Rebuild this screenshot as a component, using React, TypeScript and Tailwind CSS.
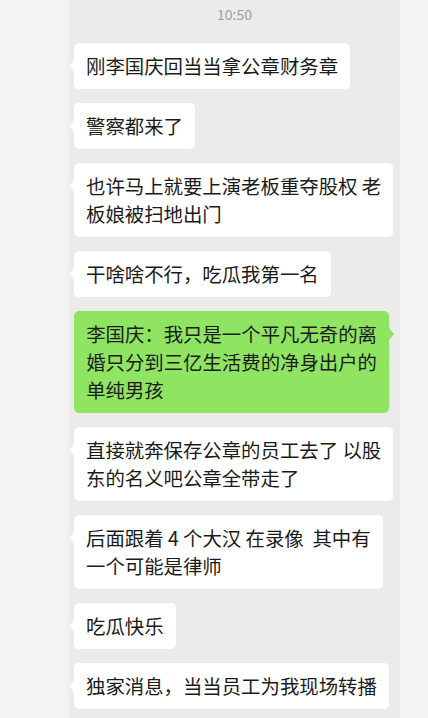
type Message = {
  id: number;
  text: string;
  mine?: boolean;
};

const messages: Message[] = [
  { id: 1, text: "刚李国庆回当当拿公章财务章" },
  { id: 2, text: "警察都来了" },
  { id: 3, text: "也许马上就要上演老板重夺股权 老\n板娘被扫地出门" },
  { id: 4, text: "干啥啥不行，吃瓜我第一名" },
  {
    id: 5,
    text: "李国庆：我只是一个平凡无奇的离\n婚只分到三亿生活费的净身出户的\n单纯男孩",
    mine: true,
  },
  { id: 6, text: "直接就奔保存公章的员工去了 以股\n东的名义吧公章全带走了" },
  { id: 7, text: "后面跟着 4 个大汉 在录像  其中有\n一个可能是律师" },
  { id: 8, text: "吃瓜快乐" },
  { id: 9, text: "独家消息，当当员工为我现场转播" },
];

function Bubble({ message }: { message: Message }) {
  if (message.mine) {
    return (
      <div className="flex justify-end pr-[11px]">
        <div className="relative rounded-[5px] bg-[#8fe462] px-[12px] py-[9px] text-[19.4px] leading-[28px] text-[#1b1b1b] whitespace-pre">
          {message.text}
          <span className="absolute right-[-5px] top-[17px] h-0 w-0 border-y-[6px] border-l-[5px] border-y-transparent border-l-[#8fe462]" />
        </div>
      </div>
    );
  }

  return (
    <div className="flex justify-start pl-[5px]">
      <div className="relative rounded-[5px] bg-white px-[12px] py-[9px] text-[19.4px] leading-[28px] text-[#1b1b1b] whitespace-pre">
        {message.text}
        <span className="absolute left-[-5px] top-[17px] h-0 w-0 border-y-[6px] border-r-[5px] border-y-transparent border-r-white" />
      </div>
    </div>
  );
}

export default function App() {
  return (
    <div
      className="flex h-[718px] w-[428px] overflow-hidden bg-[#f3f3f3]"
      style={{ fontFamily: '"Noto Sans CJK SC", "Noto Sans", sans-serif' }}
    >
      <div className="ml-[69px] flex h-full w-[331px] flex-col bg-[#ebebeb]">
        <p className="pt-[4px] text-center text-[14px] leading-[20px] text-[#a0a0a0]">
          10:50
        </p>

        <div className="mt-[19px] flex flex-col gap-[14px]">
          {messages.map((message) => (
            <Bubble key={message.id} message={message} />
          ))}
        </div>
      </div>
    </div>
  );
}
